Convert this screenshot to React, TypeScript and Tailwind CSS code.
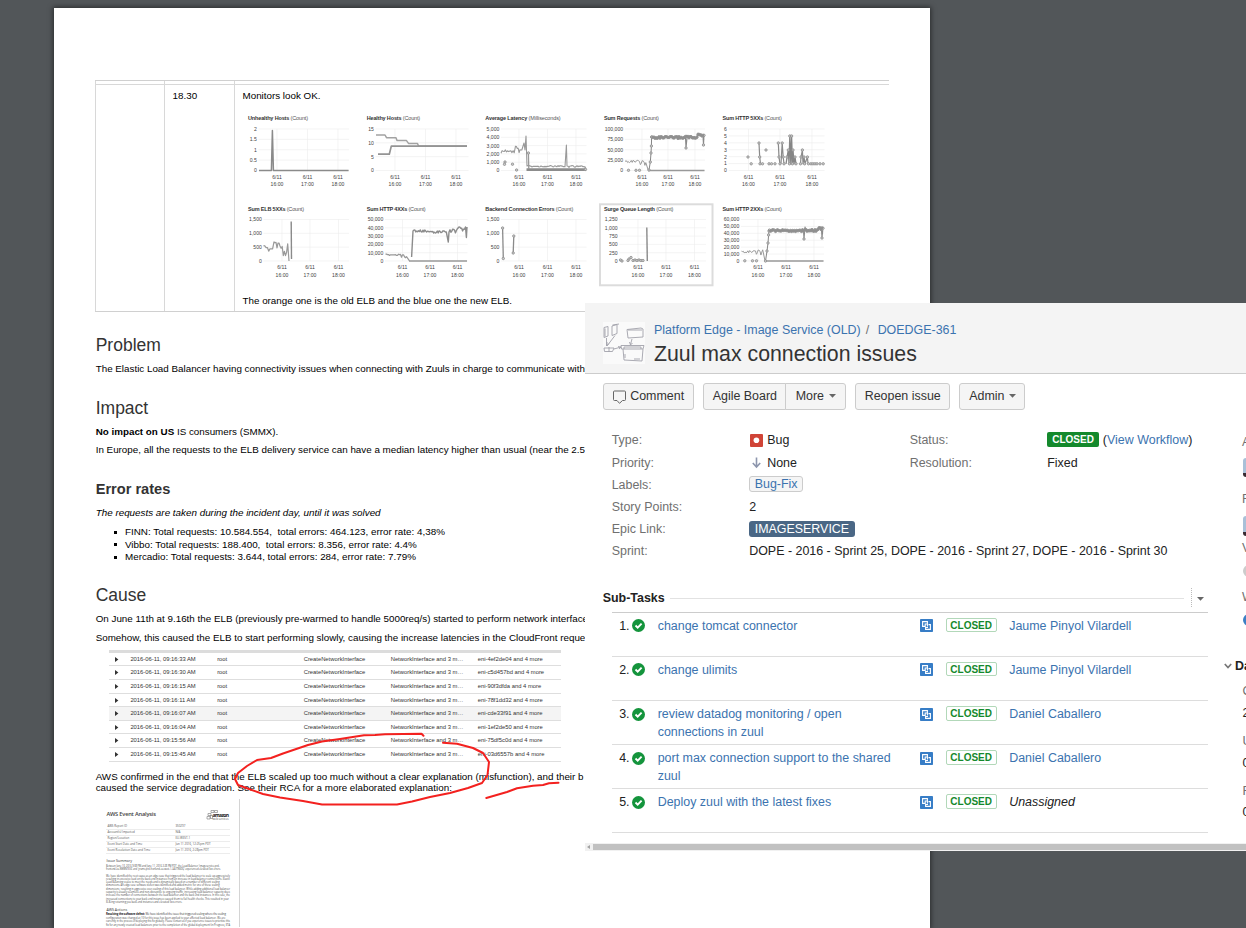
import type { ReactNode } from "react";

type Pt = [number, number];

/* ---------- monitoring charts ---------- */

const jitter = (i: number, seed: number) => {
  const v = Math.sin(i * 12.9898 + seed * 78.233) * 43758.5453;
  return (v - Math.floor(v)) * 2 - 1;
};

const noisy = (x0: number, x1: number, step: number, y: number, amp: number, seed: number): Pt[] => {
  const pts: Pt[] = [];
  for (let x = x0, i = 0; x <= x1; x += step, i++) pts.push([x, y + jitter(i, seed) * amp]);
  return pts;
};

const Line = ({ pts, w = 1, c = "#999" }: { pts: Pt[]; w?: number; c?: string }) => (
  <polyline points={pts.map((p) => p.join(",")).join(" ")} fill="none" stroke={c} strokeWidth={w} strokeLinejoin="round" />
);

const Dots = ({ pts }: { pts: Pt[] }) => (
  <g fill="#ccc" stroke="#8c8c8c" strokeWidth="0.8">
    {pts.map(([x, y], i) => (
      <circle key={i} cx={x} cy={y} r="1.2" />
    ))}
  </g>
);

interface ChartProps {
  x: number;
  top: number;
  title: string;
  unit: string;
  width: number;
  left: number;
  right: number;
  labels: string[];
  ticks: number[];
  children: ReactNode;
}

function Chart({ x, top, title, unit, width, left, right, labels, ticks, children }: ChartProps) {
  const gap = 41.5 / (labels.length - 1);
  const y0 = top + 17.5;
  return (
    <g>
      <text x={x} y={top + 8.5} fontSize="5.5" textLength={width} fill="#555">
        <tspan fontWeight="bold" fill="#333">{title}</tspan> {unit}
      </text>
      <g stroke="#ededed" strokeWidth="0.6">
        {labels.map((l, i) => (
          <line key={l} x1={left} x2={right} y1={y0 + i * gap} y2={y0 + i * gap} />
        ))}
        {ticks.map((t) => (
          <line key={t} x1={t} x2={t} y1={y0} y2={y0 + 41.5} />
        ))}
      </g>
      <g fontSize="5.1" fill="#444">
        {labels.map((l, i) => (
          <text key={l} x={left - 1.7} y={y0 + i * gap + 1.9} textAnchor="end">{l}</text>
        ))}
        {ticks.map((t, i) => (
          <g key={t} textAnchor="middle">
            <text x={t} y={y0 + 49.5}>6/11</text>
            <text x={t} y={y0 + 57}>{16 + i}:00</text>
          </g>
        ))}
      </g>
      {children}
    </g>
  );
}

const requestRise: Pt[] = [[649, 170], [650.3, 162], [651, 153], [651.4, 146], [651.6, 137]];
const requestBand: Pt[] = [...noisy(652, 685, 1, 137.5, 1, 3), ...noisy(686, 697, 1, 137.2, 1, 5), ...noisy(698, 704.5, 1, 135.2, 1, 2)];
const requestDips: Pt[][] = [[[685.500, 138], [686, 148], [687, 138]], [[703, 136], [703.5, 145], [704, 135]]];
const http2Rise: Pt[] = [[765.5, 261], [767, 251], [768, 243], [768.6, 235], [769, 231]];
const http2Band: Pt[] = [...noisy(769.500, 804, 1, 230.6, 0.9, 4), ...noisy(805, 816, 1, 230.4, 1, 7), ...noisy(817, 823.5, 1, 228.8, 1.1, 6)];
const http2Dips: Pt[][] = [[[803.5, 231], [804, 239], [805, 227], [806, 230]], [[821.500, 230], [822, 238], [822.8, 230]]];

const HeavySeries = ({ rise, band, dips }: { rise: Pt[]; band: Pt[]; dips: Pt[][] }) => (
  <>
    <Line w={1} c="#858585" pts={rise} />
    <Dots pts={rise} />
    {dips.map((d, i) => (
      <Line key={i} w={1.1} c="#8a8a8a" pts={d} />
    ))}
    <Dots pts={dips.map((d) => d[1])} />
    <Dots pts={band} />
    <Line w={2} c="#8f8f8f" pts={band} />
  </>
);

function Monitors() {
  return (
    <svg className="block h-[182px] w-[592px] font-['Liberation_Sans',sans-serif]" viewBox="240 108 592 182">
      <Chart x={248} top={111.5} title="Unhealthy Hosts" unit="(Count)" width={60} left={258.5} right={349} labels={["2", "1.5", "1", "0.5", "0"]} ticks={[277, 307.5, 338]}>
        <Line w={1.5} c="#8a8a8a" pts={[[259, 170.4], [271.4, 170.4], [272.4, 130.5], [273.4, 170.4], [348.6, 170.4]]} />
      </Chart>
      <Chart x={366.7} top={111.5} title="Healthy Hosts" unit="(Count)" width={53.5} left={375.5} right={468.5} labels={["15", "10", "5", "0"]} ticks={[395, 425.5, 456]}>
        <Line w={1.5} c="#a2a2a2" pts={[[376, 135], [385, 135], [386.5, 137.7], [396, 137.7], [397, 140.6], [406.5, 140.6], [408.5, 143.4], [417.5, 143.4], [418.5, 146], [467, 146]]} />
        <Line w={1.7} c="#949494" pts={[[378, 154.2], [389.3, 154.2], [391.3, 146.1], [467, 146.1]]} />
      </Chart>
      <Chart x={485.3} top={111.5} title="Average Latency" unit="(Milliseconds)" width={75.3} left={501} right={586.5} labels={["5,000", "4,000", "3,000", "2,000", "1,000", "0"]} ticks={[519, 547.5, 576]}>
        <Line w={1.1} pts={[...noisy(501, 515, 1.1, 151.5, 2, 9), ...noisy(515.5, 522, 0.9, 149.5, 3.5, 2), [524, 143], [525, 150], [526, 136], [527, 166], ...noisy(528, 565.5, 1, 166.3, 0.8, 2), [566.4, 145], [567, 166], ...noisy(568, 586, 1, 166.5, 0.9, 8)]} />
        <Line w={2.6} c="#8c8c8c" pts={[[526.5, 169.6], [586, 169.6]]} />
        <Line w={1.3} pts={[[528.4, 153], [528.8, 169]]} />
        <Dots pts={[[505, 162], [504.5, 164.3], [512.5, 164.2], [516.6, 170], [528.4, 153], [585.5, 169.4]]} />
      </Chart>
      <Chart x={603.9} top={111.5} title="Sum Requests" unit="(Count)" width={55} left={624.8} right={705} labels={["100,000", "75,000", "50,000", "25,000", "0"]} ticks={[642, 668, 695]}>
        <Line w={1} pts={[...noisy(625, 639, 0.9, 161.5, 1.3, 3), ...noisy(639.5, 646, 0.9, 163, 2.5, 4), [648.3, 170.4]]} />
        <Line w={1.5} c="#999" pts={[[648, 170.5], [704.5, 170.5]]} />
        <HeavySeries rise={requestRise} band={requestBand} dips={requestDips} />
        <Dots pts={[[628.5, 170.3], [636, 170.3], [639.5, 170.3]]} />
      </Chart>
      <Chart x={722.5} top={111.5} title="Sum HTTP 5XXs" unit="(Count)" width={59.3} left={728.6} right={824.5} labels={["6", "5", "4", "3", "2", "1", "0"]} ticks={[748.5, 780, 812]}>
        <Line w={1.2} c="#8a8a8a" pts={[[759, 143], [759.7, 157], [760.5, 163.8]]} />
        <Line w={1.2} c="#8a8a8a" pts={[[778.3, 143], [779, 157], [780, 163.8]]} />
        <Line w={1.2} c="#8a8a8a" pts={[[781, 163.8], [782.2, 143], [783.2, 157], [784, 163.8]]} />
        <Line w={1.3} c="#868686" pts={[[786, 163.8], [788.3, 150], [789, 163.8], [789.8, 136], [790.8, 163.8], [791.6, 136], [792.4, 163.8], [793, 150], [794, 163.8], [795, 157], [796, 163.8]]} />
        <Line w={1.2} c="#8a8a8a" pts={[[800.5, 163.8], [801, 157], [802.4, 150], [803, 163.8], [804, 157], [805, 163.8], [807.4, 157], [808, 163.8]]} />
        <Dots pts={[[748, 157], [751.2, 163.8], [759, 143], [759.7, 157], [760, 163.8], [762.5, 163.8], [766, 150], [769, 163.8], [771.5, 163.8], [775, 163.8], [778.3, 143], [779, 157], [780, 163.8], [782.2, 143], [783.2, 157], [784, 163.8], [787, 157], [788.3, 150], [789.8, 136], [791.6, 136], [789.5, 163.8], [793, 150], [792.4, 163.8], [795, 157], [796, 163.8], [801, 157], [802.4, 150], [800.5, 163.8], [804, 157], [804.6, 163.8], [807.4, 157], [808.5, 163.8], [811, 163.8], [813, 163.8], [815, 163.8], [817, 163.8], [820, 163.8], [823.2, 163.8]]} />
      </Chart>

      <Chart x={248} top={202} title="Sum ELB 5XXs" unit="(Count)" width={56} left={263.5} right={349} labels={["1,500", "1,000", "500", "0"]} ticks={[282, 310, 338.5]}>
        <Line w={1.2} pts={[...noisy(263.5, 273, 1.3, 248.5, 3, 2), ...noisy(274, 279, 1, 245.5, 4, 5), ...noisy(280, 288, 1.1, 249.5, 7.5, 3), [289, 261]]} />
        <Line w={1.4} c="#8a8a8a" pts={[[291.2, 221.5], [291.5, 259]]} />
      </Chart>
      <Chart x={366.7} top={202} title="Sum HTTP 4XXs" unit="(Count)" width={59} left={385} right={467.5} labels={["50,000", "40,000", "30,000", "20,000", "10,000", "0"]} ticks={[402.5, 430, 457.5]}>
        <Line w={1.2} pts={[...noisy(385.5, 398, 1, 254.8, 0.8, 2), ...noisy(398.5, 407, 1, 256, 2, 5), [409.5, 260.8]]} />
        <Line w={1.5} c="#999" pts={[[409, 261], [467, 261]]} />
        <Line w={1.4} c="#8c8c8c" pts={[[411.6, 257], [413, 231], ...noisy(414, 430, 0.9, 231, 1.2, 7), ...noisy(431, 447, 0.9, 232, 1.3, 3), [448.3, 242], [449, 232], ...noisy(450, 458, 0.9, 231, 2, 4), ...noisy(459, 464.5, 0.9, 229, 2.2, 2), [465.5, 227], [466.4, 237.5], [467, 227]]} />
      </Chart>
      <Chart x={485.3} top={202} title="Backend Connection Errors" unit="(Count)" width={88} left={501} right={586.5} labels={["1,500", "1,000", "500", "0"]} ticks={[519, 547.5, 576]}>
        <Line w={1.3} c="#8a8a8a" pts={[[502.6, 228], [503.3, 258.5]]} />
        <Line w={1.3} c="#8a8a8a" pts={[[513.8, 236], [513.2, 253]]} />
        <Dots pts={[[502.6, 228], [503.3, 258.5], [513.8, 236], [513.2, 253]]} />
      </Chart>
      <rect x="600" y="204.3" width="112.5" height="81" fill="none" stroke="#dcdcdc" strokeWidth="2" />
      <Chart x={603.9} top={202} title="Surge Queue Length" unit="(Count)" width={69.5} left={619.3} right={706} labels={["1,250", "1,000", "750", "500", "250", "0"]} ticks={[638, 666, 694.5]}>
        <Line w={1.4} c="#8a8a8a" pts={[[646.8, 227.5], [647.3, 261]]} />
        <Dots pts={[[620.5, 260], [622, 261], [628, 260.5], [629, 259], [631, 257.5], [633, 260.5], [635, 260], [637, 260.5], [639, 260], [641, 260.5], [643, 260.5]]} />
      </Chart>
      <Chart x={722.5} top={202} title="Sum HTTP 2XXs" unit="(Count)" width={59.3} left={741} right={824} labels={["60,000", "50,000", "40,000", "30,000", "20,000", "10,000", "0"]} ticks={[758, 786, 814]}>
        <Line w={1} pts={[...noisy(741.5, 755, 0.9, 251.8, 1.3, 3), ...noisy(755.5, 763.5, 0.9, 252.5, 2.7, 4), [765, 260.8]]} />
        <Line w={1.5} c="#999" pts={[[765, 261], [823.5, 261]]} />
        <HeavySeries rise={http2Rise} band={http2Band} dips={http2Dips} />
        <Dots pts={[[744.8, 260.8], [752.5, 260.8], [756.5, 260.8]]} />
      </Chart>
    </svg>
  );
}

/* ---------- incident document ---------- */

const EVENTS = [
  ["2016-06-11, 09:16:33 AM", "eni-4ef2de04 and 4 more"],
  ["2016-06-11, 09:16:30 AM", "eni-c5d457bd and 4 more"],
  ["2016-06-11, 09:16:15 AM", "eni-90f3dfda and 4 more"],
  ["2016-06-11, 09:16:11 AM", "eni-78f1dd32 and 4 more"],
  ["2016-06-11, 09:16:07 AM", "eni-cde33f91 and 4 more"],
  ["2016-06-11, 09:16:04 AM", "eni-1ef2de50 and 4 more"],
  ["2016-06-11, 09:15:56 AM", "eni-75df5c0d and 4 more"],
  ["2016-06-11, 09:15:45 AM", "eni-03d6557b and 4 more"],
];

function EventLog() {
  return (
    <div className="ml-[13px] mt-[6px] w-[452px] text-[5.83px] leading-[13px] text-[#333]">
      <div className="h-[2.6px] bg-[#dcdcdc]" />
      {EVENTS.map(([time, eni], i) => (
        <div key={time} className={`grid h-[13.65px] grid-cols-[21.7px_86.8px_86.5px_87px_87px_1fr] border-b border-[#dedede] ${i === 4 ? "bg-[#f4f4f4]" : ""}`}>
          <svg className="ml-[6px] mt-[4px] h-[5px] w-[4px]" viewBox="0 0 4 5"><path d="M0 0L3.4 2.5L0 5Z" fill="#333" /></svg>
          <span>{time}</span>
          <span>root</span>
          <span>CreateNetworkInterface</span>
          <span>NetworkInterface and 3 m…</span>
          <span>{eni}</span>
        </div>
      ))}
    </div>
  );
}

const AWS_FIELDS = [
  ["AWS Report ID", "350297"],
  ["Account(s) Impacted", "N/A"],
  ["Region/Location", "EU-WEST-1"],
  ["Event Start Date and Time", "Jun 11 2016, 12:25pm PDT"],
  ["Event Resolution Date and Time", "Jun 11 2016, 2:28pm PDT"],
];

const SUMMARY = [
  "Between June 10, 2016 9:08 PM and June 11, 2016 2:28 PM PDT, the Load Balancer 'imageservice-prd-",
  "frontend-eu-NNNNTE06' and 'yrums-prd-frontend-eu-west-1-LAUTNSDQ' experienced elevated 5xx errors.",
];
const DETAIL = [
  "We have identified the root cause as an edge case that triggered the load balancer to scale up aggressively",
  "resulting in excessive load on the back end instances from an increase in load balancer connections. Elastic",
  "Load Balancing scales to meet the needs and is dynamically based on a number of different scaling",
  "dimensions. An edge case software defect was identified and added metric for one of these scaling",
  "dimensions, resulting in aggressive over-scaling of this load balancer. While adding additional load balancer",
  "capacity is usually seamless and non-disruptive to ongoing traffic, increasing load balancer capacity does",
  "increase the number of connections between the load balancer and the back end instances. In this case, the",
  "increased connections to your back end instances caused them to fail health checks. This resulted in your",
  "ELB-ing returning you back-end instances and elevated 5xx errors.",
];
const ACTIONS = [
  "configuration was changed at 10 for this issue has been applied to your affected load balancer. We are",
  "currently in the process of deploying this fix globally. Please contact us if you experience issues to prioritize this",
  "fix for any newly created load balancers prior to the completion of the global deployment (in Progress, ETA",
];

function Tiny({ lines }: { lines: string[] }) {
  return (
    <>
      {lines.map((l) => (
        <svg key={l} className="block h-[3.3px] w-[124px] overflow-visible">
          <text x="0" y="2.6" fontSize="2.7" fill="#444" textLength={Math.min(124, l.length * 1.17)} lengthAdjust="spacingAndGlyphs">{l}</text>
        </svg>
      ))}
    </>
  );
}

function AwsReport() {
  return (
    <div className="mt-[6px] h-[128px] w-[144px] overflow-hidden border-r border-[#d4d4d4] pl-[10.7px] font-['Open_Sans',sans-serif] text-[3px] leading-[4px] text-[#555]">
      <div className="flex h-[24px] items-start justify-between pr-[9px] pt-[10.5px]">
        <span className="text-[5.7px] font-semibold leading-[9px] tracking-[-0.035em] text-[#444]">AWS Event Analysis</span>
        <svg className="mt-[0.5px] h-[12px] w-[24px]" viewBox="0 0 24 12">
          <g fill="none" stroke="#777" strokeWidth="0.6">
            <path d="M5 0.500h3v2h-3zM8.500 0.500h3v2h-3zM2 3.500h3v2h-3zM1 6.500h3v2.500h-3zM4.500 5.500h2v3h-2z" />
          </g>
          <text x="6.500" y="6.500" fontSize="5" fontWeight="bold" fill="#222" textLength="16.500">amazon</text>
          <text x="6.500" y="9.500" fontSize="2.800" fill="#555" textLength="16">web services</text>
        </svg>
      </div>
      <div className="mr-[9px]">
        {AWS_FIELDS.map(([k, v]) => (
          <div key={k} className="flex h-[6.050px] items-center shadow-[0_0.500px_0_#d8d8d8]">
            <span className="w-[69px] whitespace-nowrap pl-px text-[2.9px]">{k}</span>
            <span className="whitespace-nowrap text-[2.9px]">{v}</span>
          </div>
        ))}
      </div>
      <div className="mt-[6px] text-[3.6px] text-[#333]">Issue Summary</div>
      <div className="h-[0.5px]" />
      <Tiny lines={SUMMARY} />
      <div className="h-[3px]" />
      <Tiny lines={DETAIL} />
      <div className="mt-[5px] text-[3.6px] text-[#333]">AWS Actions</div>
      <svg className="block h-[3.7px] w-[124px] overflow-visible">
        <text x="0" y="3" fontSize="2.8" fill="#444" textLength="120">
          <tspan fontWeight="bold" fill="#222">Resolving the software defect:</tspan> We have identified the issue that triggered scaling where the scaling
        </text>
      </svg>
      <Tiny lines={ACTIONS} />
    </div>
  );
}

function Document() {
  return (
    <div className="h-[920px] w-[876px] shrink-0 bg-white pl-[41.700px] pt-[72px] text-[9.82px] leading-[12px] text-black shadow-[0_0_5px_1px_rgba(0,0,0,0.5)]">
      <div className="-ml-[0.700px] w-[794px] border-b border-t border-[#d0d0d0]">
        <div className="grid h-[4px] grid-cols-[70px_70px_1fr] border-b border-[#d8d8d8]">
          <div className="border-l border-r border-[#d8d8d8]" />
          <div className="border-r border-[#d8d8d8]" />
        </div>
        <div className="grid h-[226px] grid-cols-[70px_70px_1fr]">
          <div className="border-l border-r border-[#d8d8d8]" />
          <div className="border-r border-[#d8d8d8] pl-[7.600px] pt-[5px]">18.30</div>
          <div className="flex flex-col pl-[7.500px] pt-[5px]">
            <span>Monitors look OK.</span>
            <div className="-ml-[2.500px] mt-[6px]"><Monitors /></div>
            <span className="mt-[5px]">The orange one is the old ELB and the blue one the new ELB.</span>
          </div>
        </div>
      </div>
      <div className="whitespace-nowrap">
        <h2 className="mt-[23px] text-[17.5px] leading-[20px] text-[#333]">Problem</h2>
        <p className="mt-[8px]">The Elastic Load Balancer having connectivity issues when connecting with Zuuls in charge to communicate with</p>
        <h2 className="mt-[23px] text-[17.5px] leading-[20px] text-[#333]">Impact</h2>
        <p className="mt-[8px]"><b>No impact on US</b> IS consumers (SMMX).</p>
        <p className="mt-[6px]">In Europe, all the requests to the ELB delivery service can have a median latency higher than usual (near the 2.5</p>
        <h3 className="mt-[23px] text-[14.6px] font-bold leading-[20px] text-[#333]">Error rates</h3>
        <p className="mt-[8px] text-[9.85px] italic">The requests are taken during the incident day, until it was solved</p>
        <ul className="mt-[7px] text-[9.85px] leading-[12.500px]">
          {[
            "FINN: Total requests: 10.584.554,\u00a0 total errors: 464.123, error rate: 4,38%",
            "Vibbo: Total requests: 188.400,\u00a0 total errors: 8.356, error rate: 4.4%",
            "Mercadio: Total requests: 3.644, total errors: 284, error rate: 7.79%",
          ].map((t) => (
            <li key={t} className="flex items-center pl-[18.300px]">
              <span className="mr-[8px] size-[3px] bg-black" />
              {t}
            </li>
          ))}
        </ul>
        <h2 className="mt-[21.500px] text-[17.5px] leading-[20px] text-[#333]">Cause</h2>
        <p className="mt-[8px]">On June 11th at 9.16th the ELB (previously pre-warmed to handle 5000req/s) started to perform network interface</p>
        <p className="mt-[7px]">Somehow, this caused the ELB to start performing slowly, causing the increase latencies in the CloudFront reque</p>
        <EventLog />
        <p className="mt-[9.500px] leading-[11px]">
          AWS confirmed in the end that the ELB scaled up too much without a clear explanation (misfunction), and their b
          <br />
          caused the service degradation. See their RCA for a more elaborated explanation:
        </p>
        <AwsReport />
      </div>
    </div>
  );
}

function RedPen() {
  return (
    <svg className="pointer-events-none absolute left-[230px] top-[728px] h-[84px] w-[340px]" viewBox="230 728 340 84" fill="none" stroke="#f3211f" strokeWidth="2" strokeLinecap="round" strokeLinejoin="round">
      <path d="M423.500 735.700L421.500 733.800L385 734.200L375 735L364 735.200L340 739L322 741.500L308 745L283 753.500L271 758L257 760L247 766L238 773L235 779L238 785L249 789L263 794L280 797.500L303 801L322 804.500L397 804.500L412 801.500L430 797L450 793L468 788L482 783L487.500 775L489 762L483 753L473 748L457 743.800L443 742.700" />
      <path d="M486.300 798L507 792L517 788.300L533 785.700L543 785L549 783.200L558.500 782.700" />
    </svg>
  );
}

/* ---------- issue panel ---------- */

const Caret = ({ c = "" }: { c?: string }) => (
  <svg className={`h-[4px] w-[7px] ${c}`} viewBox="0 0 7 4"><path d="M0 0H7L3.500 3.700Z" fill="#666" /></svg>
);

function ProjectAvatar() {
  return (
    <svg className="h-[42px] w-[42px]" viewBox="0 0 42 42" fill="none" stroke="#a2a2aa" strokeWidth="0.9">
      <rect width="42" height="42" fill="#fafafa" stroke="none" />
      <path d="M1 5.500L5 4.500V14L1 15.500ZM2 6.500V14.500M9 4L14 2.500V11.500L9 13.500ZM9.500 3L16 2M3.500 16V24M12 13.500L4 24M4 20V23.500L6 21.500M1 26H11L9.500 29.500H1.500ZM6 25V30" />
      <path d="M24 7.500L38 6L40 7V15L25 16ZM25 8H39M29 17L27.500 22.500M26.500 20L27.500 23L29.500 21M11 27L18 25M15 24.500L18 25.200L16 27" />
      <path d="M18 23.500H41L40 27H18.500ZM20 27L21 38L39 39L40 27M21 27V25H38V27M22 32V36M31 37H37" />
    </svg>
  );
}

const BTN = "flex h-[27px] items-center border border-[#ccc] bg-[#f5f5f5] text-[#333]";

function Toolbar() {
  return (
    <div className="flex pl-[17.700px] pt-[8.600px]">
      <div className={`${BTN} w-[91.500px] rounded-[3px] pl-[9.500px]`}>
        <svg className="mr-[4px] mt-px h-[14px] w-[13px]" viewBox="0 0 13 14" fill="none" stroke="#666" strokeWidth="1">
          <path d="M1.500 1H11.500Q12.500 1 12.500 2V9.500Q12.500 10.500 11.500 10.500H9.500L6.500 13.300L4 10.500H1.500Q0.500 10.500 0.500 9.500V2Q0.500 1 1.500 1Z" strokeLinejoin="round" />
        </svg>
        Comment
      </div>
      <div className={`${BTN} ml-[8.500px] w-[83.500px] rounded-l-[3px] pl-[9px]`}>Agile Board</div>
      <div className={`${BTN} -ml-px w-[60.500px] rounded-r-[3px] pl-[9.500px]`}>More<Caret c="ml-[5px]" /></div>
      <div className={`${BTN} ml-[9px] w-[95.500px] rounded-[3px] pl-[9px]`}>Reopen issue</div>
      <div className={`${BTN} ml-[9px] w-[66px] rounded-[3px] pl-[9px]`}>Admin<Caret c="ml-[5px]" /></div>
    </div>
  );
}

const Row = ({ label, children }: { label: string; children: ReactNode }) => (
  <div className="flex h-[22.150px] items-center">
    <span className="w-[137.500px] shrink-0 text-[#707070]">{label}</span>
    <span className="flex shrink-0 items-center">{children}</span>
  </div>
);

const Details = () => (
  <div className="flex whitespace-nowrap pl-[26.700px] pt-[19.800px] text-[#222]">
    <div className="w-[298px]">
      <Row label="Type:">
        <svg className="ml-[1px] mr-[4px] size-[13px]" viewBox="0 0 13 13"><rect width="13" height="13" rx="1" fill="#d04437" /><circle cx="6.400" cy="6.300" r="2.800" fill="#fff" /></svg>
        Bug
      </Row>
      <Row label="Priority:">
        <svg className="ml-[1px] mr-[4px] size-[13px]" viewBox="0 0 13 13" fill="none" stroke="#8d96ad" strokeWidth="1.600"><path d="M6.500 1.500V10.500M2.800 7L6.500 11L10.200 7" /></svg>
        None
      </Row>
      <Row label="Labels:">
        <span className="-mt-[2px] h-[16px] rounded-[3px] border border-[#ccc] bg-[#f5f5f5] px-[4.500px] leading-[14px] text-[#3b73af]">Bug-Fix</span>
      </Row>
      <Row label="Story Points:">2</Row>
      <Row label="Epic Link:">
        <span className="-mt-px h-[16px] rounded-[3px] bg-[#4a6785] px-[5.500px] leading-[16px] text-white">IMAGESERVICE</span>
      </Row>
      <Row label="Sprint:">DOPE - 2016 - Sprint 25, DOPE - 2016 - Sprint 27, DOPE - 2016 - Sprint 30</Row>
    </div>
    <div>
      <Row label="Status:">
        <span className="-mt-[2px] mr-[4px] h-[15px] rounded-[2px] bg-[#14892c] px-[5px] text-[10px] font-bold leading-[15px] text-white">CLOSED</span>
        (<span className="text-[#3b73af]">View Workflow</span>)
      </Row>
      <Row label="Resolution:">Fixed</Row>
    </div>
  </div>
);

const TASKS: [string[], string][] = [
  [["change tomcat connector"], "Jaume Pinyol Vilardell"],
  [["change ulimits"], "Jaume Pinyol Vilardell"],
  [["review datadog monitoring / open", "connections in zuul"], "Daniel Caballero"],
  [["port max connection support to the shared", "zuul"], "Daniel Caballero"],
  [["Deploy zuul with the latest fixes"], ""],
];

const SubTasks = () => (
  <div className="pl-[17.700px] pt-[25px]">
    <div className="flex h-[21px] w-[606px] items-center">
      <span className="font-bold text-[#222]">Sub-Tasks</span>
      <span className="ml-[5px] mt-[2px] h-px flex-1 bg-[#e2e2e2]" />
      <span className="ml-[7px] h-[19px] border-l border-dotted border-[#bbb]" />
      <Caret c="ml-[5px] mr-[5px] mt-[2px]" />
    </div>
    <div className="ml-[9px] mt-[3.600px] w-[596px] border-t border-[#ccc]">
      {TASKS.map(([lines, who], i) => (
        <div key={i} className="grid h-[44.100px] grid-cols-[20px_26px_262px_26px_63.500px_1fr] border-b border-[#ddd] pt-[4px] leading-[18px]">
          <span className="pl-[7.500px] text-[#222]">{i + 1}.</span>
          <svg className="mt-[2.500px] size-[13px]" viewBox="0 0 13 13"><circle cx="6.500" cy="6.500" r="6.500" fill="#14943c" /><path d="M3.500 6.500L5.700 8.600L9.600 4.700" fill="none" stroke="#fff" strokeWidth="1.900" /></svg>
          <span className="whitespace-nowrap text-[#3b73af]">{lines.map((l) => <span key={l} className="block">{l}</span>)}</span>
          <svg className="mt-[2.500px] size-[13px]" viewBox="0 0 13 13"><rect width="13" height="13" rx="0.800" fill="#377dc6" /><g fill="none" stroke="#fff" strokeWidth="1.100"><path d="M7.400 5V2.600H2.600V7.400H5.200V5H7.400V7.400" /><path d="M8.500 5.600H10.400V10.400H5.600V8.500H8" /></g></svg>
          <span className="mt-px h-[14.500px] w-[51px] rounded-[2px] border border-[#b2d8b9] text-center text-[10px] font-bold leading-[13px] text-[#14892c]">CLOSED</span>
          {who ? <span className="whitespace-nowrap text-[#3b73af]">{who}</span> : <span className="italic text-[#222]">Unassigned</span>}
        </div>
      ))}
    </div>
  </div>
);

/* Column cut off by the right edge of the window */
const Sidebar = () => (
  <div className="flex w-[24px] shrink-0 flex-col overflow-hidden whitespace-nowrap pt-[60px] leading-[16px] text-[#707070]">
    <span className="ml-[20px]">A</span>
    <span className="ml-[21px] mt-[8px] h-[19px] w-[20px] rounded-l-[3px] border-b-[4px] border-[#3a2c33] bg-[#a9c0d8]" />
    <span className="ml-[20px] mt-[14px]">R</span>
    <span className="ml-[21px] mt-[9px] h-[20px] w-[20px] rounded-l-[3px] border-b-[4px] border-[#3a2c33] bg-[#a9c0d8]" />
    <span className="ml-[20px] mt-[4px]">V</span>
    <span className="ml-[21px] mt-[9px] h-[12px] w-[20px] shrink-0 rounded-full bg-[#ccc]" />
    <span className="ml-[20px] mt-[12px]">W</span>
    <span className="ml-[21px] mt-[9px] h-[12px] w-[20px] shrink-0 rounded-full bg-[#3b7fc4]" />
    <div className="mt-[32px] flex items-center font-bold text-[#222]">
      <svg className="ml-[2px] mr-[3px] h-[6px] w-[8px] shrink-0" viewBox="0 0 8 6" fill="none" stroke="#777" strokeWidth="1.700"><path d="M0.800 1L4 4.500L7.200 1" /></svg>
      Da
    </div>
    <span className="ml-[20.500px] mt-[9px]">C</span>
    <span className="ml-[20.500px] mt-[6px] text-[#222]">2</span>
    <span className="ml-[20.500px] mt-[12px]">U</span>
    <span className="ml-[20.500px] mt-[6px] text-[#222]">0</span>
    <span className="ml-[20.500px] mt-[12px]">R</span>
    <span className="ml-[20.500px] mt-[5px] text-[#222]">0</span>
  </div>
);

function IssuePanel() {
  return (
    <div className="absolute left-[585px] top-[303px] flex h-[548px] w-[661px] flex-col overflow-hidden bg-white text-[12.45px] leading-[16px]">
      <div className="flex h-[71px] shrink-0 border-b border-[#ccc] bg-[#f4f4f4] pl-[18px] pt-[19px]">
        <ProjectAvatar />
        <div className="ml-[9px]">
          <div className="flex gap-[5px] text-[#3b73af]">
            <span>Platform Edge - Image Service (OLD)</span>
            <span className="text-[#707070]">/</span>
            <span className="ml-[3.500px]">DOEDGE-361</span>
          </div>
          <h1 className="mt-[3px] text-[21.3px] leading-[26px] text-[#333]">Zuul max connection issues</h1>
        </div>
      </div>
      <div className="flex min-h-0 flex-1">
        <div className="w-[637px] shrink-0">
          <Toolbar />
          <Details />
          <SubTasks />
        </div>
        <Sidebar />
      </div>
      <div className="flex h-[8px] shrink-0 items-center bg-[#f1f1f1]">
        <svg className="ml-[2px] h-[4px] w-[3px]" viewBox="0 0 3 4"><path d="M3 0V4L0 2Z" fill="#a3a3a3" /></svg>
        <span className="ml-[3px] h-[6px] flex-1 bg-[#c1c1c1]" />
      </div>
    </div>
  );
}

export default function App() {
  return (
    <div className="relative h-[928px] w-[1246px] overflow-hidden bg-[#525659] pl-[54px] pt-[8px] font-['Liberation_Sans',Arial,sans-serif]">
      <Document />
      <RedPen />
      <IssuePanel />
    </div>
  );
}
